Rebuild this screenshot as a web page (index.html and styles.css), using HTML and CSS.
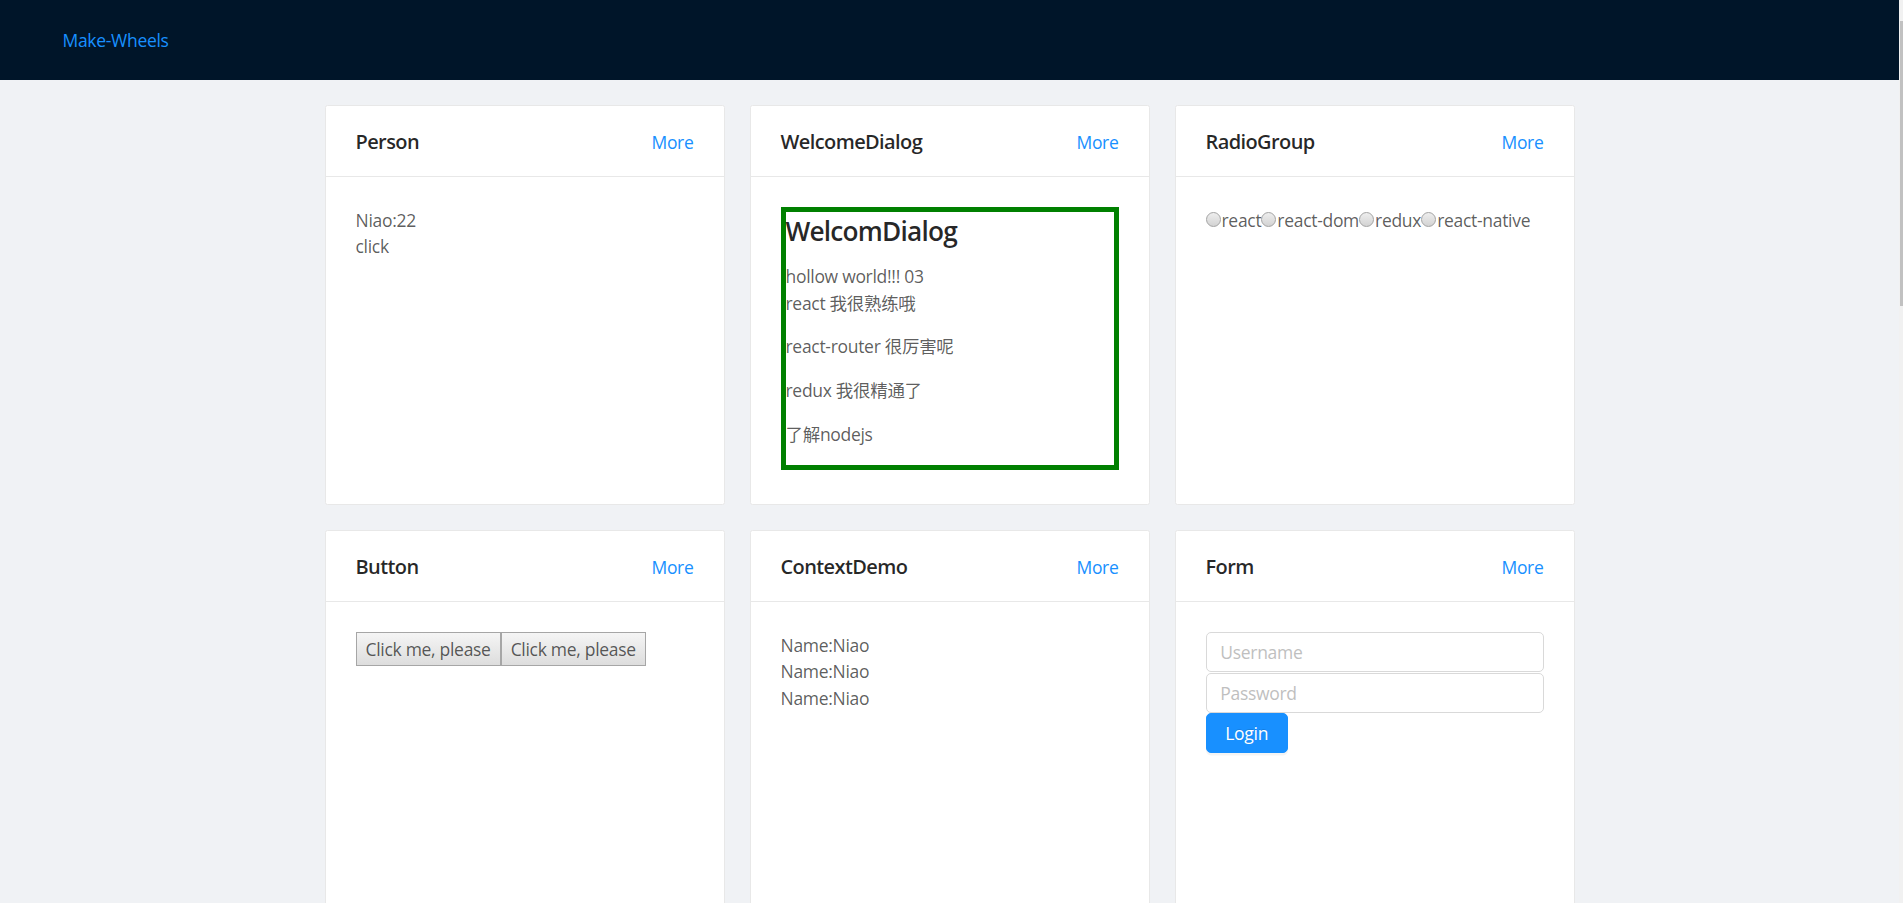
FILE: index.html
```html
<!DOCTYPE html>
<html lang="zh-CN">
<head>
<meta charset="utf-8">
<title>Make-Wheels</title>
<link rel="stylesheet" href="styles.css">
</head>
<body>
<section class="layout">
  <header class="header"><a class="logo" href="#">Make-Wheels</a></header>
  <main class="content">
    <div class="grid">
      <div class="card">
        <div class="card-head"><div class="card-title">Person</div><a class="card-extra" href="#">More</a></div>
        <div class="card-body">
          <div>Niao:22</div>
          <div>click</div>
        </div>
      </div>
      <div class="card">
        <div class="card-head"><div class="card-title">WelcomeDialog</div><a class="card-extra" href="#">More</a></div>
        <div class="card-body">
          <div class="dialog">
            <h1 class="dialog-title">WelcomDialog</h1>
            <div>hollow world!!! 03</div>
            <p class="dialog-text">react 我很熟练哦</p>
            <p class="dialog-text">react-router 很厉害呢</p>
            <p class="dialog-text">redux 我很精通了</p>
            <p class="dialog-text">了解nodejs</p>
          </div>
        </div>
      </div>
      <div class="card">
        <div class="card-head"><div class="card-title">RadioGroup</div><a class="card-extra" href="#">More</a></div>
        <div class="card-body">
          <div class="radio-group"><label class="radio-item"><input class="radio" type="radio" name="lib" value="react">react</label><label class="radio-item"><input class="radio" type="radio" name="lib" value="react-dom">react-dom</label><label class="radio-item"><input class="radio" type="radio" name="lib" value="redux">redux</label><label class="radio-item"><input class="radio" type="radio" name="lib" value="react-native">react-native</label></div>
        </div>
      </div>
      <div class="card">
        <div class="card-head"><div class="card-title">Button</div><a class="card-extra" href="#">More</a></div>
        <div class="card-body">
          <div class="btn-row"><button class="native-btn" type="button">Click me, please</button><button class="native-btn" type="button">Click me, please</button></div>
        </div>
      </div>
      <div class="card">
        <div class="card-head"><div class="card-title">ContextDemo</div><a class="card-extra" href="#">More</a></div>
        <div class="card-body">
          <div>Name:Niao</div>
          <div>Name:Niao</div>
          <div>Name:Niao</div>
        </div>
      </div>
      <div class="card">
        <div class="card-head"><div class="card-title">Form</div><a class="card-extra" href="#">More</a></div>
        <div class="card-body">
          <form class="login-form">
            <input class="text-input" type="text" placeholder="Username">
            <input class="text-input" type="password" placeholder="Password">
            <button class="primary-btn" type="button">Login</button>
          </form>
        </div>
      </div>
    </div>
  </main>
</section>
<div class="scrollbar"><div class="scrollbar-thumb"></div></div>
</body>
</html>
```
FILE: styles.css
```css
html {
  scrollbar-width: none;
}

body {
  margin: 0;
  background: #f0f2f5;
  font-family: "Open Sans", "Noto Sans CJK SC", sans-serif;
  font-size: 17.5px;
  line-height: 1.5;
  letter-spacing: -0.3px;
  color: rgba(0, 0, 0, 0.65);
}

.layout {
  display: flex;
  flex-direction: column;
  margin-right: 4px;
  min-height: 1300px;
}

/* page scrollbar indicator (overlay on the right edge) */
.scrollbar {
  position: fixed;
  top: 0;
  right: 0;
  width: 4px;
  height: 100%;
  background: #f1f1f1;
}

.scrollbar-thumb {
  position: absolute;
  top: 21px;
  left: 1px;
  width: 3px;
  height: 285px;
  background: #c1c1c1;
}

.header {
  height: 80px;
  padding: 0 62.5px;
  background: #001529;
  line-height: 80px;
}

.logo {
  color: #1890ff;
  text-decoration: none;
}

.content {
  padding: 25px 0;
}

.grid {
  width: 1250px;
  margin: 0 auto;
  display: grid;
  grid-template-columns: repeat(3, 400px);
  gap: 25px;
}

.card {
  box-sizing: border-box;
  height: 400px;
  background: #fff;
  border: 1px solid #e8e8e8;
  border-radius: 2.5px;
}

.card-head {
  display: flex;
  justify-content: space-between;
  align-items: center;
  min-height: 60px;
  padding: 0 30px;
  border-bottom: 1px solid #e8e8e8;
}

.card-title {
  padding: 21px 0 19px;
  font-size: 20px;
  line-height: 30px;
  font-weight: 600;
  letter-spacing: -0.6px;
  color: rgba(0, 0, 0, 0.85);
}

.card-extra {
  padding: 21px 0 19px;
  color: #1890ff;
  text-decoration: none;
}

.card-body {
  padding: 30px;
}

.dialog {
  border: 5px solid #008000;
}

.dialog-title {
  margin: 0 0 12px;
  font-size: 26.25px;
  line-height: 1.5;
  font-weight: 600;
  letter-spacing: -0.8px;
  color: rgba(0, 0, 0, 0.85);
}

.dialog-text {
  margin: 0 0 17.5px;
}

.radio-item {
  white-space: nowrap;
}

.radio {
  -webkit-appearance: none;
  appearance: none;
  box-sizing: border-box;
  display: inline-block;
  width: 15px;
  height: 15px;
  margin: 0 1px 0 0;
  vertical-align: 0;
  border: 1px solid #a3a3a3;
  border-radius: 50%;
  background: linear-gradient(#eeeeee, #d3d3d3);
}

.btn-row {
  display: flex;
}

.native-btn {
  box-sizing: border-box;
  height: 34px;
  margin: 0;
  padding: 0 9px;
  font: inherit;
  letter-spacing: inherit;
  color: inherit;
  border: 1px solid #a6a6a6;
  border-radius: 0;
  background: linear-gradient(#f5f5f5, #dddddd);
}

.login-form {
  margin: 0;
}

.text-input {
  box-sizing: border-box;
  display: block;
  width: 100%;
  height: 40px;
  margin: 0 0 1px;
  padding: 5px 13.75px;
  font: inherit;
  letter-spacing: inherit;
  color: rgba(0, 0, 0, 0.65);
  background: #fff;
  border: 1px solid #d9d9d9;
  border-radius: 5px;
  outline: none;
}

.text-input + .text-input {
  margin-bottom: 0;
}

.text-input::placeholder {
  color: #bfbfbf;
}

.primary-btn {
  display: block;
  height: 40px;
  margin: 0;
  padding: 0 18.75px;
  font: inherit;
  letter-spacing: inherit;
  color: #fff;
  background: #1890ff;
  border: 1px solid #1890ff;
  border-radius: 5px;
  text-shadow: 0 -1px 0 rgba(0, 0, 0, 0.12);
  box-shadow: 0 2.5px 0 rgba(0, 0, 0, 0.045);
}
```
